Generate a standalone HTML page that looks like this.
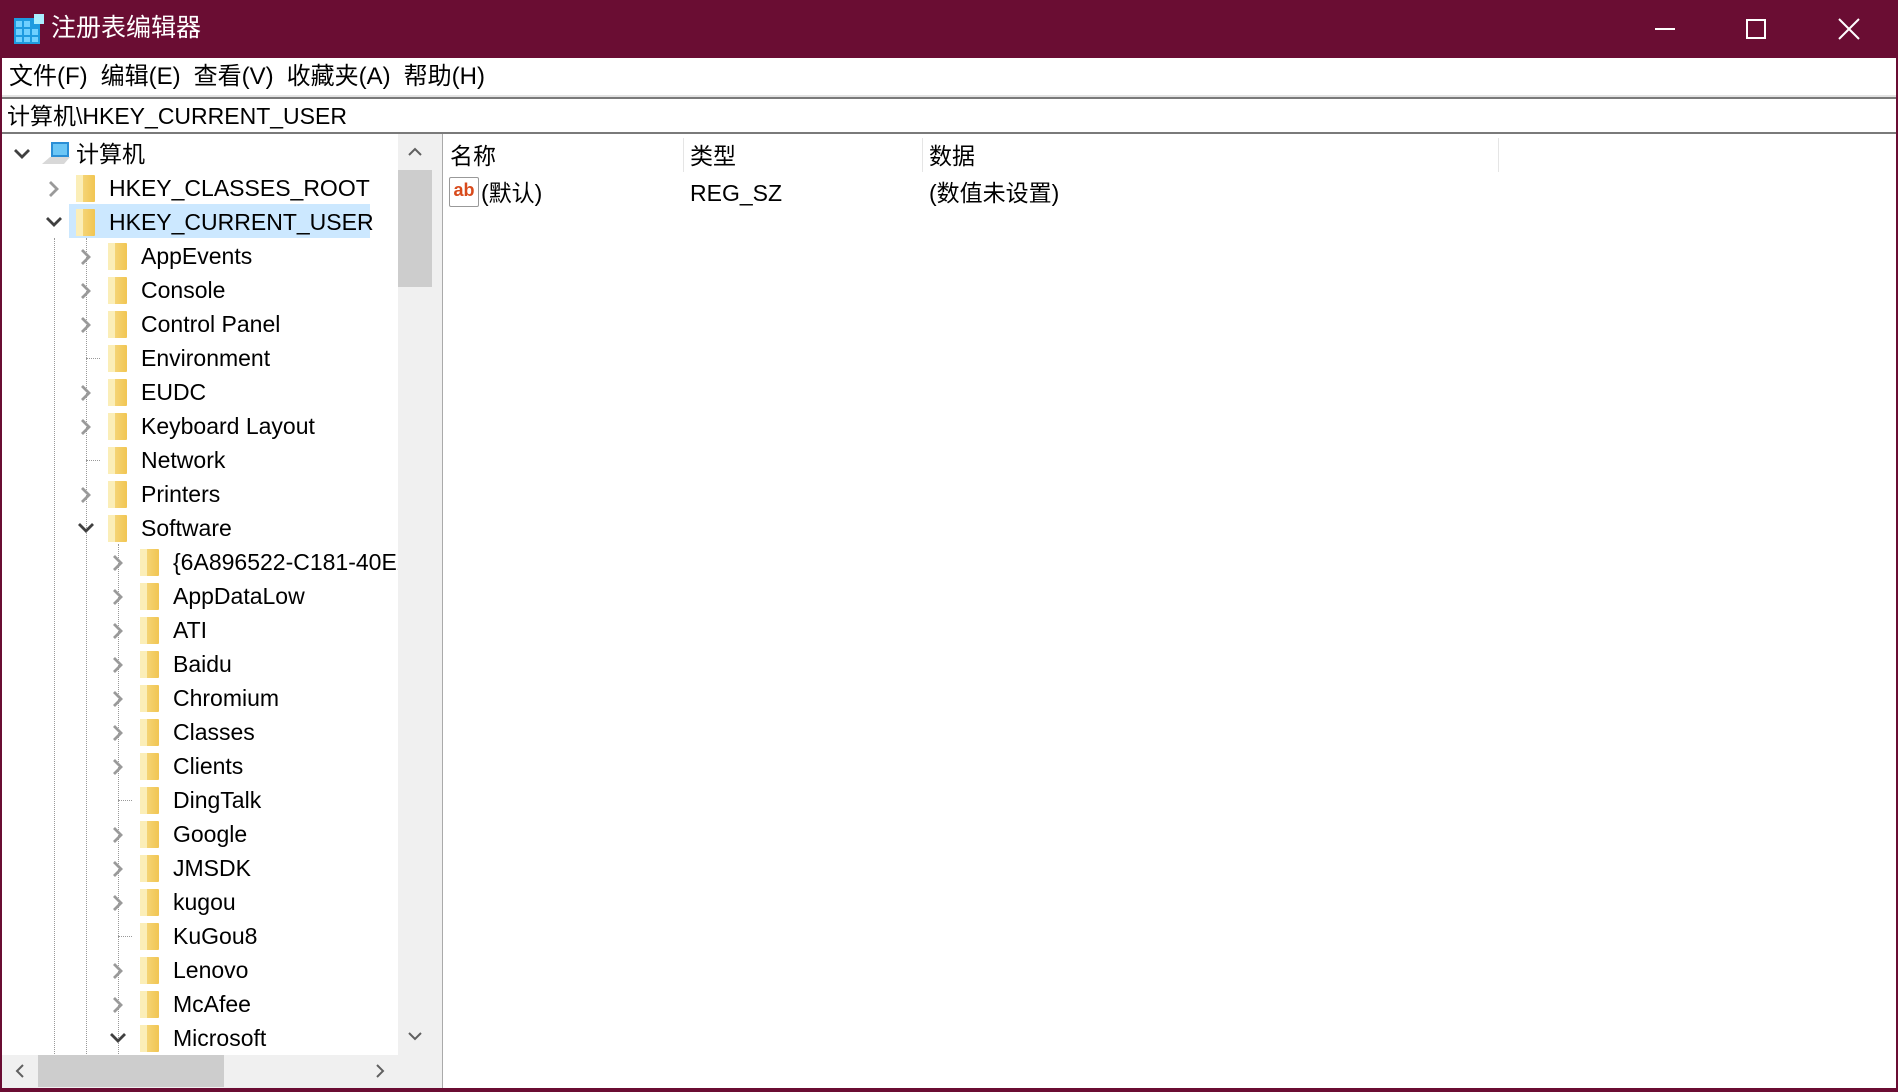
<!DOCTYPE html>
<html><head><meta charset="utf-8"><style>
*{margin:0;padding:0;box-sizing:border-box}
body{width:1898px;height:1092px;background:#6a0d33;position:relative;overflow:hidden;font-family:"Segoe UI","Liberation Sans","Noto Sans CJK SC",sans-serif;color:#000}
.abs{position:absolute}
#title{left:0;top:0;width:1898px;height:58px;color:#fff;font-size:25px}
#menu{left:2px;top:58px;width:1894px;height:39px;background:#fff;font-size:24px;line-height:38px;border-bottom:2px solid #e3e3e3}
#menu span{margin-left:7px;margin-right:6px}
#addr{left:2px;top:97px;width:1894px;height:37px;background:#fff;border-top:2px solid #7a7a7a;border-bottom:2px solid #7a7a7a;font-size:23px;line-height:34px;padding-left:5px}
#tree{left:2px;top:134px;width:430px;height:954px;background:#fff;overflow:hidden}
#split{left:432px;top:134px;width:11px;height:954px;background:#f0f0f0;border-right:1px solid #aaa}
#right{left:443px;top:134px;width:1453px;height:954px;background:#fff}
.row{position:absolute;height:34px;font-size:23px;line-height:34px;white-space:nowrap}
.fold{position:absolute;width:19px;height:27px;top:4px;background:linear-gradient(90deg,#f7dd8a,#f1c552);border-radius:1px}
.fold:before{content:"";position:absolute;left:0;top:0;width:7px;height:27px;background:#fbeeb8}
.chev{position:absolute;top:9px}
</style></head><body>
<div id="title" class="abs">
 <svg class="abs" style="left:14px;top:14px" width="30" height="30"><rect x="0" y="4" width="26" height="26" fill="#1e9be0"/><g fill="#6fd0ff"><rect x="2" y="7" width="6" height="6"/><rect x="10" y="7" width="6" height="6"/><rect x="2" y="15" width="6" height="6"/><rect x="10" y="15" width="6" height="6"/><rect x="18" y="15" width="6" height="6"/><rect x="2" y="23" width="6" height="5"/><rect x="10" y="23" width="6" height="5"/><rect x="18" y="23" width="6" height="5"/></g><rect x="20" y="0" width="10" height="10" fill="#aef" /></svg>
 <div class="abs" style="left:51px;top:12px;line-height:32px">注册表编辑器</div>
 <div class="abs" style="left:1655px;top:28px;width:20px;height:2px;background:#fff"></div>
 <div class="abs" style="left:1746px;top:19px;width:20px;height:20px;border:2px solid #fff"></div>
 <svg class="abs" style="left:1838px;top:18px" width="22" height="22"><path d="M1 1L21 21M21 1L1 21" stroke="#fff" stroke-width="2"/></svg>
</div>
<div id="menu" class="abs"><span style="margin-left:7px">文件(F)</span><span>编辑(E)</span><span>查看(V)</span><span>收藏夹(A)</span><span>帮助(H)</span></div>
<div id="addr" class="abs">计算机\HKEY_CURRENT_USER</div>
<div id="tree" class="abs">
 <div class="abs" style="left:67px;top:70px;width:301px;height:34px;background:#cce8ff"></div>
 <div class="abs" style="left:52px;top:104px;height:850px;border-left:1px dotted #999"></div>
 <div class="abs" style="left:84px;top:104px;height:850px;border-left:1px dotted #999"></div>
 <div class="abs" style="left:116px;top:410px;height:550px;border-left:1px dotted #999"></div>
 <div id="rows"></div>
</div>
<div class="abs" style="left:398px;top:134px;width:34px;height:921px;background:#f0f0f0"></div>
<div class="abs" style="left:398px;top:170px;width:34px;height:117px;background:#cdcdcd"></div>
<svg class="abs" style="left:406px;top:146px" width="18" height="12"><path d="M3 9L9 3L15 9" stroke="#606060" stroke-width="2" fill="none"/></svg>
<svg class="abs" style="left:406px;top:1030px" width="18" height="12"><path d="M3 3L9 9L15 3" stroke="#606060" stroke-width="2" fill="none"/></svg>
<div class="abs" style="left:2px;top:1055px;width:430px;height:33px;background:#f0f0f0"></div>
<div class="abs" style="left:38px;top:1055px;width:186px;height:32px;background:#cdcdcd"></div>
<svg class="abs" style="left:14px;top:1062px" width="12" height="18"><path d="M9 3L3 9L9 15" stroke="#606060" stroke-width="2" fill="none"/></svg>
<svg class="abs" style="left:374px;top:1062px" width="12" height="18"><path d="M3 3L9 9L3 15" stroke="#606060" stroke-width="2" fill="none"/></svg>
<div id="split" class="abs"></div>
<div id="right" class="abs">
 <div class="abs" style="left:0;top:0;width:1056px;height:40px;font-size:23px;line-height:44px">
  <span class="abs" style="left:7px">名称</span><span class="abs" style="left:247px">类型</span><span class="abs" style="left:486px">数据</span>
  <div class="abs" style="left:240px;top:4px;height:34px;border-left:1px solid #e5e5e5"></div>
  <div class="abs" style="left:479px;top:4px;height:34px;border-left:1px solid #e5e5e5"></div>
  <div class="abs" style="left:1055px;top:4px;height:34px;border-left:1px solid #e5e5e5"></div>
 </div>
 <div class="abs" style="left:6px;top:43px;width:30px;height:30px;border:1px solid #999;background:#fff;border-radius:2px;color:#d84a1b;font-size:18px;line-height:24px;text-align:center;font-weight:bold">ab</div>
 <div class="abs" style="top:42px;font-size:23px;line-height:34px;left:38px">(默认)</div>
 <div class="abs" style="top:42px;font-size:23px;line-height:34px;left:247px">REG_SZ</div>
 <div class="abs" style="top:42px;font-size:23px;line-height:34px;left:486px">(数值未设置)</div>
</div>
<script>
var R=[[0,'v','计算机'],[1,'>','HKEY_CLASSES_ROOT'],[1,'v','HKEY_CURRENT_USER'],[2,'>','AppEvents'],[2,'>','Console'],[2,'>','Control Panel'],[2,'-','Environment'],[2,'>','EUDC'],[2,'>','Keyboard Layout'],[2,'-','Network'],[2,'>','Printers'],[2,'v','Software'],[3,'>','{6A896522-C181-40E2-A5B4-0000}'],[3,'>','AppDataLow'],[3,'>','ATI'],[3,'>','Baidu'],[3,'>','Chromium'],[3,'>','Classes'],[3,'>','Clients'],[3,'-','DingTalk'],[3,'>','Google'],[3,'>','JMSDK'],[3,'>','kugou'],[3,'-','KuGou8'],[3,'>','Lenovo'],[3,'>','McAfee'],[3,'v','Microsoft']];
var h='';
R.forEach(function(r,i){var l=r[0],t=3+i*34,cx=l*32+20;
 if(r[1]=='>')h+='<svg class="chev abs" style="left:'+(cx-6)+'px;top:'+(t+9)+'px" width="12" height="18"><path d="M2 2L9 9L2 16" stroke="#9a9a9a" stroke-width="2.8" fill="none"/></svg>';
 else if(r[1]=='v')h+='<svg class="chev abs" style="left:'+(cx-9)+'px;top:'+(t+11)+'px" width="18" height="12"><path d="M2 2L9 9L16 2" stroke="#404040" stroke-width="2.8" fill="none"/></svg>';
 else h+='<div class="abs" style="left:'+cx+'px;top:'+(t+17)+'px;width:14px;border-top:1px dotted #999"></div>';
 if(l==0)h+='<svg class="abs" style="left:38px;top:'+(t+3)+'px" width="32" height="28"><path d="M2 24L10 17H30L24 24Z" fill="#d8d8d8"/><rect x="11" y="2" width="18" height="15" fill="#2b8fd6"/><rect x="13" y="4" width="14" height="11" fill="#6cc6f5"/></svg>';
 else h+='<div class="fold" style="left:'+(l*32+42)+'px;top:'+(t+4)+'px"></div>';
 h+='<div class="row" style="left:'+(l*32+(l?75:74))+'px;top:'+t+'px">'+r[2]+'</div>';
});
document.getElementById('rows').innerHTML=h;
</script>
</body></html>
